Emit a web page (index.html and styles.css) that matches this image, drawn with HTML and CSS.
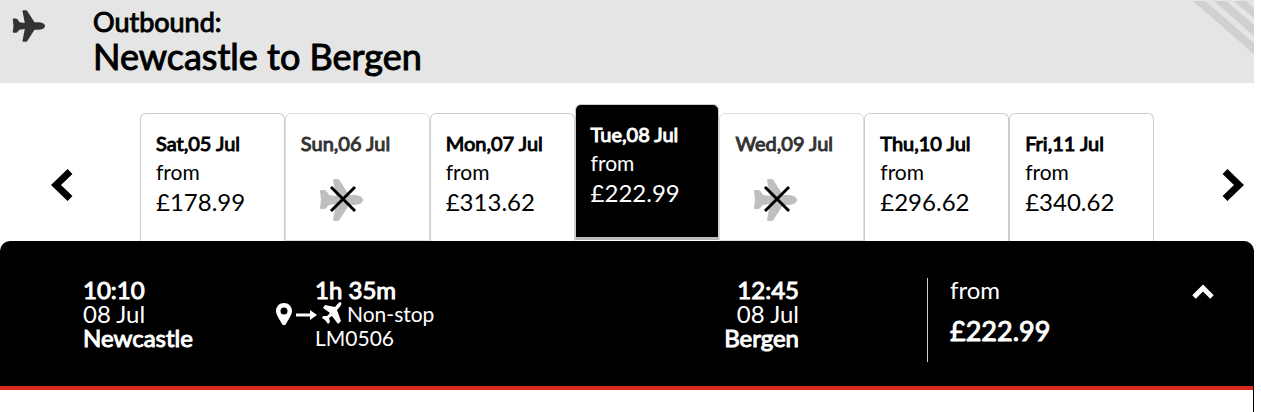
FILE: index.html
```html
<!DOCTYPE html>
<html lang="en">
<head>
<meta charset="utf-8">
<title>Outbound: Newcastle to Bergen</title>
<link rel="stylesheet" href="styles.css">
</head>
<body>
<svg class="symbols" aria-hidden="true">
  <symbol id="plane" viewBox="0 0 44 42">
    <path d="M1 12 Q1 11 2 11 H5 Q7 11 8 13 L10 16 L17 17 L14 1 Q14 0 15 0 H19 Q20 0 21 2 L30 16 H36 Q44 17 44 21 Q44 25 36 26 H30 L21 40 Q20 42 19 42 H15 Q14 42 14 41 L17 25 L10 26 L8 28 Q7 30 5 30 H2 Q1 30 1 29 L2 21 Z"/>
  </symbol>
</svg>
<main class="page">
  <header class="route">
    <svg class="route-icon" aria-hidden="true"><use href="#plane"/></svg>
    <h1 class="route-title"><span class="route-kind">Outbound:</span><span class="route-name">Newcastle to Bergen</span></h1>
    <svg class="route-stripes" viewBox="0 0 61 55" aria-hidden="true"><path d="M0 1H12L61 43V54Z M21 1H33L61 25V36Z M41 1H53L61 8V18Z"/></svg>
  </header>

  <nav class="days" aria-label="Travel dates">
    <button class="arrow" aria-label="Earlier dates"><svg viewBox="0 0 22 34" aria-hidden="true"><path d="M19 3.500L5 17L19 30.500"/></svg></button>
    <div class="day-list">
      <button class="day"><span class="day-date">Sat,05 Jul</span><span class="day-from">from</span><span class="day-price">£178.99</span></button>
      <button class="day day-none" disabled><span class="day-date">Sun,06 Jul</span><svg class="no-flight" viewBox="0 0 44 42" role="img" aria-label="No flight"><use href="#plane"/><path class="cross" d="M12 8L36 32M36 8L12 32"/></svg></button>
      <button class="day"><span class="day-date">Mon,07 Jul</span><span class="day-from">from</span><span class="day-price">£313.62</span></button>
      <button class="day day-active" aria-pressed="true"><span class="day-date">Tue,08 Jul</span><span class="day-from">from</span><span class="day-price">£222.99</span></button>
      <button class="day day-none" disabled><span class="day-date">Wed,09 Jul</span><svg class="no-flight" viewBox="0 0 44 42" role="img" aria-label="No flight"><use href="#plane"/><path class="cross" d="M12 8L36 32M36 8L12 32"/></svg></button>
      <button class="day"><span class="day-date">Thu,10 Jul</span><span class="day-from">from</span><span class="day-price">£296.62</span></button>
      <button class="day"><span class="day-date">Fri,11 Jul</span><span class="day-from">from</span><span class="day-price">£340.62</span></button>
    </div>
    <button class="arrow" aria-label="Later dates"><svg viewBox="0 0 22 34" aria-hidden="true"><path d="M3 3.500L17 17L3 30.500"/></svg></button>
  </nav>

  <section class="flight">
    <div class="flight-summary">
      <div class="stop">
        <strong class="strong">10:10</strong><span>08 Jul</span><strong class="strong">Newcastle</strong>
      </div>
      <div class="journey">
        <strong class="strong journey-text">1h 35m</strong>
        <svg class="journey-icons" viewBox="0 0 68 24" aria-hidden="true">
          <path fill-rule="evenodd" d="M8 1C12.500 1 16 4.500 16 9C16 13 12 18 10 22Q8 24.500 6 22C4 18 0 13 0 9C0 4.500 3.500 1 8 1ZM8 5.500A3.500 3.500 0 1 0 8 12.500A3.500 3.500 0 1 0 8 5.500Z"/>
          <path d="M20 11.500H34V8L41 13L34 18V14.500H20Z"/>
          <path d="M64 0Q66 0 65 3Q64 5 61 8L65 19L62 22L56 14L53 16L54 20L52 22L49 18L46 16L47 14H51L54 11L47 6L49 3L59 5Q62 1 64 0Z"/>
        </svg>
        <span class="journey-type">Non-stop</span>
        <span class="journey-text journey-code">LM0506</span>
      </div>
      <div class="stop stop-end">
        <strong class="strong">12:45</strong><span>08 Jul</span><strong class="strong">Bergen</strong>
      </div>
      <div class="fare"><span class="fare-from">from</span><strong class="fare-price">£222.99</strong></div>
      <button class="toggle" aria-label="Hide flight details"><svg viewBox="0 0 24 16" aria-hidden="true"><path d="M3 13L12 4L21 13"/></svg></button>
    </div>
    <div class="flight-details"></div>
  </section>
</main>
</body>
</html>
```

FILE: styles.css
```css
* { box-sizing: border-box; }
body { margin: 0; background: #fff; color: #000; font-family: Lato, "Liberation Sans", sans-serif; }
button { margin: 0; padding: 0; border: 0; background: none; color: inherit; font: inherit; text-align: left; cursor: pointer; }
.symbols { position: absolute; width: 0; height: 0; }
.page { padding-right: 7px; }

.route { display: flex; align-items: flex-start; background: #e5e5e5; }
.route-icon { width: 33px; height: 32px; margin: 10px 48px 0 12px; fill: #333; }
.route-title { flex: 1; margin: 0; padding: 6px 0 9px; font-weight: 400; }
.route-kind, .route-name { display: block; -webkit-text-stroke: 1px; }
.route-kind { font-size: 27px; line-height: 32px; }
.route-name { font-size: 36px; line-height: 36px; }
.route-stripes { width: 61px; height: 55px; fill: #d0d0d0; }

.days { display: flex; padding: 21px 0 0; }
.arrow { display: flex; flex: none; align-items: center; width: 140px; padding: 24px 0 0 51px; }
.arrow:last-child { width: 100px; padding-left: 68px; }
.arrow svg { width: 22px; height: 34px; fill: none; stroke: #000; stroke-width: 7; }
.day-list { display: grid; flex: 1; grid-template-columns: repeat(7, 1fr); }
.day { display: flex; flex-direction: column; justify-content: flex-start; height: 128px; margin-top: 9px; padding: 15px 15px 0; border: 1px solid #ccc; border-bottom: 0; border-radius: 6px 6px 0 0; }
.day-none { border-color: #ddd; border-bottom: 1px solid #ddd; color: #333; }
.day-active { height: 136px; margin: 0; border-bottom: 3px solid #bbb; background: #000; color: #fff; }
.day-date { font-size: 20px; line-height: 28px; -webkit-text-stroke: 1px; }
.day-from { font-size: 21px; line-height: 30px; }
.day-price { font-size: 24px; line-height: 30px; }
.no-flight { width: 44px; height: 42px; margin: 22px 0 0 18px; fill: #bfbfbf; }
.cross { stroke: #000; stroke-width: 3; }

.flight { border-right: 1px solid #000; border-radius: 10px 10px 0 0; background: #000; }
.flight-summary { display: flex; padding: 37px 38px 24px 83px; border-bottom: 4px solid #dc281e; color: #fff; font-size: 24px; line-height: 24px; }
.stop { display: flex; flex-direction: column; width: 193px; }
.stop-end { flex: 1; text-align: right; }
.strong { font-weight: 400; -webkit-text-stroke: 1px; }
.journey { display: grid; grid-template-columns: 68px auto; align-content: start; column-gap: 3px; }
.journey-text { grid-column: 1 / -1; padding-left: 39px; }
.journey-icons { width: 68px; height: 24px; fill: #fff; }
.journey-type, .journey-code { font-size: 21px; }
.fare { display: flex; flex-direction: column; width: 264px; height: 84px; margin-left: 128px; padding-left: 22px; border-left: 1px solid #ccc; }
.fare-from { line-height: 24px; }
.fare-price { padding-top: 13px; font-size: 27px; line-height: 32px; font-weight: 400; -webkit-text-stroke: 1px; }
.toggle { align-self: flex-start; padding-top: 6px; }
.toggle svg { display: block; width: 24px; height: 16px; fill: none; stroke: #fff; stroke-width: 5; }
.flight-details { min-height: 22px; background: #fff; }
```
